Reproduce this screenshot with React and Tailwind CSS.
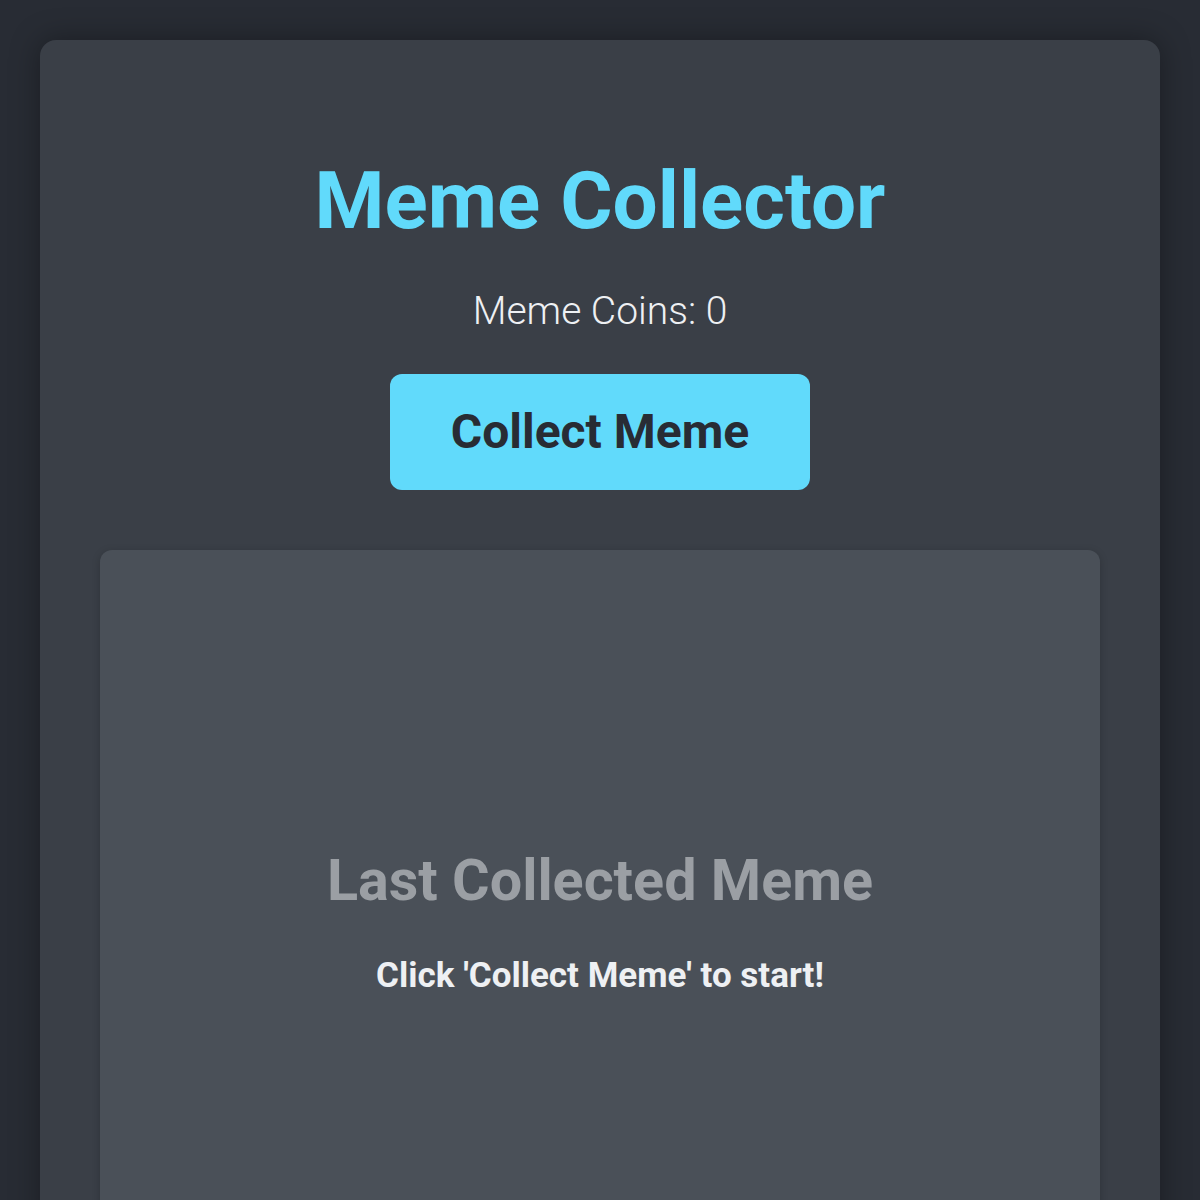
export default function App() {
  return (
    <div className="min-h-[1200px] bg-[#282c34] px-10 pt-10 font-['Roboto',sans-serif] overflow-hidden h-[1200px]">
      <div className="bg-[#3a3f47] rounded-2xl shadow-[0_0_30px_rgba(0,0,0,0.35)] flex flex-col items-center pt-[121px] px-[60px] h-[1300px]">
        <h1 className="text-[80px] leading-none font-bold text-[#61dafb]">Meme Collector</h1>
        <p className="mt-[51px] text-[39px] leading-none font-light text-[#eef0f3]">Meme Coins: 0</p>
        <button className="mt-[43px] w-[420px] h-[116px] rounded-xl bg-[#61dafb] text-[#282c34] text-[48px] font-bold leading-none">Collect Meme</button>
        <div className="mt-[60px] w-full bg-[#4a5058] rounded-xl shadow-[0_2px_8px_rgba(0,0,0,0.2)] flex flex-col items-center pt-[302px] h-[760px]">
          <h2 className="text-[57.5px] leading-none font-bold text-[#9b9fa4]">Last Collected Meme</h2>
          <p className="mt-[48px] text-[35px] leading-none font-bold text-[#eef0f3]">Click 'Collect Meme' to start!</p>
        </div>
      </div>
    </div>
  );
}
